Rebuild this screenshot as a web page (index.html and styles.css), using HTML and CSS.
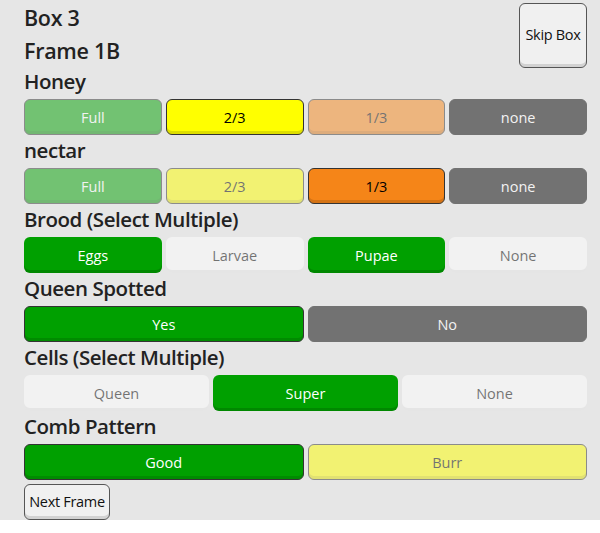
FILE: index.html
```html
<!DOCTYPE html>
<html>
<head>
<meta charset="utf-8">
<link rel="stylesheet" href="styles.css">
</head>
<body>
<div class="page">
  <div class="header">
    <div class="titles">
      <div class="title">Box 3</div>
      <div class="title">Frame 1B</div>
    </div>
    <button class="plain skip">Skip Box</button>
  </div>

  <div class="label">Honey</div>
  <div class="row cols4">
    <button class="opt single off green">Full</button>
    <button class="opt single yellow">2/3</button>
    <button class="opt single off orange">1/3</button>
    <button class="opt single off black">none</button>
  </div>

  <div class="label">nectar</div>
  <div class="row cols4">
    <button class="opt single off green">Full</button>
    <button class="opt single off yellow">2/3</button>
    <button class="opt single orange">1/3</button>
    <button class="opt single off black">none</button>
  </div>

  <div class="label">Brood (Select Multiple)</div>
  <div class="row cols4">
    <button class="opt multi on">Eggs</button>
    <button class="opt multi">Larvae</button>
    <button class="opt multi on">Pupae</button>
    <button class="opt multi">None</button>
  </div>

  <div class="label">Queen Spotted</div>
  <div class="row cols2">
    <button class="opt single green">Yes</button>
    <button class="opt single off black">No</button>
  </div>

  <div class="label">Cells (Select Multiple)</div>
  <div class="row cols3">
    <button class="opt multi">Queen</button>
    <button class="opt multi on">Super</button>
    <button class="opt multi">None</button>
  </div>

  <div class="label">Comb Pattern</div>
  <div class="row cols2">
    <button class="opt single green">Good</button>
    <button class="opt single off yellow">Burr</button>
  </div>

  <button class="plain next">Next Frame</button>
</div>
</body>
</html>
```

FILE: styles.css
```css
html, body {
  margin: 0;
  padding: 0;
  background: #ffffff;
}

.page {
  background: #e6e6e6;
  padding: 0 13px 0 24px;
  font-family: "Open Sans", "Noto Sans", sans-serif;
  color: #222222;
}

.header {
  display: flex;
  justify-content: space-between;
  align-items: flex-start;
  height: 66px;
}

.titles {
  padding-top: 0.5px;
}

.title {
  font-size: 21.5px;
  font-weight: 600;
  line-height: 33px;
  letter-spacing: -0.3px;
}

.label {
  font-size: 20.5px;
  font-weight: 600;
  line-height: 25px;
  margin: 3px 0 5px;
  letter-spacing: -0.45px;
}

.row {
  display: grid;
  gap: 4px;
}

.cols4 { grid-template-columns: repeat(4, 1fr); }
.cols3 { grid-template-columns: repeat(3, 1fr); }
.cols2 { grid-template-columns: repeat(2, 1fr); }

button {
  font-family: "Open Sans", "Noto Sans", sans-serif;
  font-size: 14.5px;
  margin: 0;
  cursor: pointer;
  white-space: nowrap;
}

.opt {
  height: 36px;
  border-radius: 6px;
  display: flex;
  align-items: center;
  justify-content: center;
  padding: 0;
  box-shadow: inset 0 -3px 0 rgba(0, 0, 0, 0.13);
}

.single {
  border: 1px solid #333333;
}

.multi {
  border: none;
  background: #ffffff;
  color: #000000;
  box-shadow: inset 0 -3px 0 rgba(0, 0, 0, 0.1);
}

.multi.on {
  background: #00a000;
  color: #ffffff;
  box-shadow: inset 0 -3px 0 rgba(0, 0, 0, 0.15);
}

.multi:not(.on) {
  opacity: 0.5;
}

.off {
  opacity: 0.5;
}

.green { background: #00a000; color: #ffffff; }
.yellow { background: #ffff00; color: #000000; }
.orange { background: #f58518; color: #000000; }
.black { background: #000000; color: #ffffff; border-color: #000000; }

.plain {
  background: #f0f0f0;
  border: 1px solid #555555;
  border-radius: 6px;
  color: #111111;
  box-shadow: inset 0 -3px 0 rgba(0, 0, 0, 0.12);
  padding: 0 0 2px;
  letter-spacing: -0.3px;
}

.skip {
  width: 68px;
  height: 65px;
  margin-top: 3px;
  margin-bottom: -3px;
}

.next {
  display: block;
  height: 36px;
  width: 86px;
  margin-top: 4px;
}
```
